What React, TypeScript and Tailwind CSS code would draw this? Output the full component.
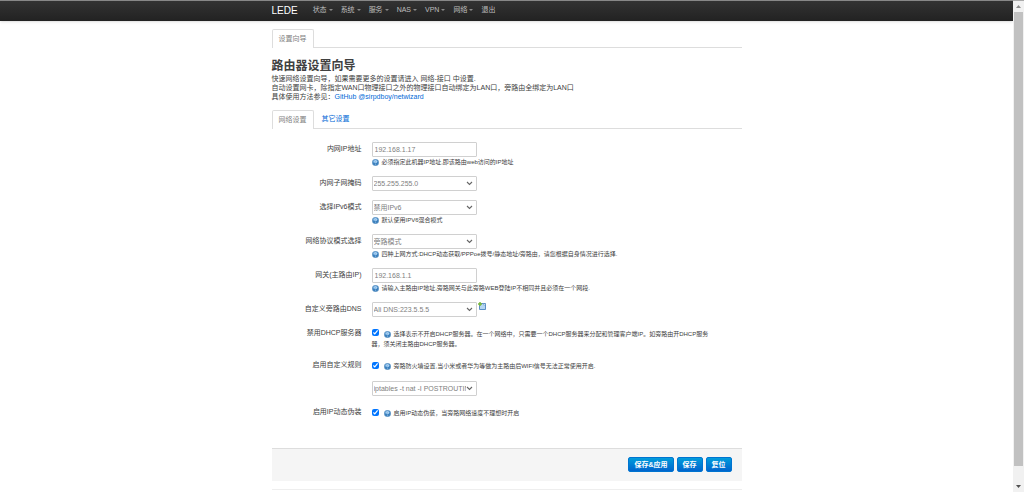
import type { ReactNode } from 'react';

interface RowProps {
  id: string;
  label?: string;
  help?: ReactNode;
  children: ReactNode;
}

interface SelectProps {
  id: string;
  value: string;
  label?: string;
}

const menus = ['状态', '系统', '服务', 'NAS', 'VPN', '网络'];

const HelpIcon = () => (
  <svg className="mr-[3px] inline-block h-[7px] w-[7px] align-middle" viewBox="0 0 14 14" aria-hidden="true">
    <circle cx="7" cy="7" r="6.5" fill="#3a7fbd" stroke="#6f9fc8" />
    <ellipse cx="6.500" cy="5" rx="4.500" ry="3.500" fill="#7fb6e4" />
    <path d="M5 5.400c0-2.600 4.200-2.400 4.200 0C9.200 6.900 7.200 7 7.200 8.600M7.200 10v1.400" fill="none" stroke="#d8eafa" strokeWidth="1.200" />
  </svg>
);

const AddIcon = () => (
  <svg className="h-[8px] w-[8px]" viewBox="0 0 16 16" aria-hidden="true">
    <path d="M3 3h12v12H3z" fill="#b5d6f3" stroke="#5b8fc4" strokeWidth="2" />
    <path d="M11 3v3h4" fill="#fff" stroke="#5b8fc4" />
    <path d="M4 0v8M0 4h8" stroke="#7cb93c" strokeWidth="3" />
  </svg>
);

const TextField = ({ id, value }: SelectProps) => (
  <input
    id={id}
    type="text"
    defaultValue={value}
    className="h-[15px] w-[105px] rounded-[1px] border border-[#d0d0d0] bg-white px-[2px] text-[7px] leading-[13px] text-[#808080] outline-none"
  />
);

const Select = ({ id, value, label }: SelectProps) => (
  <div className="relative w-[105px]">
    <select
      id={id}
      aria-label={label}
      className="block h-[15px] w-full appearance-none rounded-[1px] border border-[#d0d0d0] bg-white pr-[10px] pl-px text-[7px] leading-[13px] text-[#808080] outline-none"
    >
      <option>{value}</option>
    </select>
    <svg className="pointer-events-none absolute top-[5px] right-[4px] h-[5px] w-[7px]" viewBox="0 0 7 5" aria-hidden="true">
      <path d="M1 1l2.500 2.500L6 1" fill="none" stroke="#666" strokeWidth="1.100" />
    </svg>
  </div>
);

const Row = ({ id, label, help, children }: RowProps) => (
  <div className="flex gap-[10px]">
    <div className="w-[90px] shrink-0 text-right leading-[14px]">
      {label && <label htmlFor={id}>{label}</label>}
    </div>
    <div className="min-w-0 flex-1">
      <div className="flex gap-px">{children}</div>
      {help && (
        <p className="text-[6px] leading-[10px]">
          <HelpIcon />
          {help}
        </p>
      )}
    </div>
  </div>
);

const CheckRow = ({ id, label, children }: RowProps) => (
  <div className="flex gap-[10px]">
    <div className="w-[90px] shrink-0 text-right leading-[14px]">
      <label htmlFor={id}>{label}</label>
    </div>
    <p className="min-w-0 flex-1 pt-[3px] text-[6px] leading-[10px]">
      <input id={id} type="checkbox" defaultChecked className="mr-[5px] mb-[3px] h-[7px] w-[7px] align-middle accent-[#0075ff]" />
      <HelpIcon />
      {children}
    </p>
  </div>
);

const Tab = ({ active, children }: { active?: boolean; children: ReactNode }) => (
  <a
    href="#"
    className={
      active
        ? '-mb-px h-[19px] rounded-t-[2px] border border-b-0 border-[#ddd] bg-white px-[6px] leading-[17px] text-[#808080]'
        : 'h-[18px] px-[8px] leading-[18px] text-[#0069d6]'
    }
  >
    {children}
  </a>
);

const Button = ({ children }: { children: ReactNode }) => (
  <button
    type="button"
    className="h-[15px] rounded-[2px] border border-[#0074d0] bg-linear-to-b from-[#049cdb] to-[#0064cd] px-[5px] text-[7px] leading-[13px] font-bold text-white"
  >
    {children}
  </button>
);

const App = () => {
  return (
    <div className="flex h-screen overflow-hidden bg-white font-['Liberation_Sans','Noto_Sans_CJK_SC',sans-serif] text-[7px] text-[#404040]">
      <div className="min-w-0 flex-1">
        <header className="h-[21px] border-t border-[#888] bg-linear-to-b from-[#333] to-[#222] shadow-sm">
          <div className="mx-auto flex h-full w-[470px] items-center gap-[15px] pb-[2px]">
            <a href="#" className="text-[10px] text-white">LEDE</a>
            <nav className="flex gap-[8px] text-[#bfbfbf]">
              {menus.map((menu) => (
                <a key={menu} href="#" className="flex items-center gap-[2px]">
                  {menu}
                  <span className="border-x-2 border-t-2 border-x-transparent border-t-[#888]" />
                </a>
              ))}
              <a href="#">退出</a>
            </nav>
          </div>
        </header>

        <main className="mx-auto w-[470px]">
          <div className="mt-[8px] flex border-b border-[#ddd]">
            <Tab active>设置向导</Tab>
          </div>

          <h2 className="mt-[10px] text-[12px] leading-[16px] font-bold">路由器设置向导</h2>
          <div className="leading-[9px]">
            <p>快速网络设置向导，如果需要更多的设置请进入 网络-接口 中设置.</p>
            <p>自动设置网卡，除指定WAN口物理接口之外的物理接口自动绑定为LAN口，旁路由全绑定为LAN口</p>
            <p>
              具体使用方法参见：<a href="#" className="text-[#0069d6]">GitHub @sirpdboy/netwizard</a>
            </p>
          </div>

          <div className="mt-[9px] flex border-b border-[#ddd]">
            <Tab active>网络设置</Tab>
            <Tab>其它设置</Tab>
          </div>

          <form className="mt-[13px]">
            <div className="flex flex-col gap-[9px]">
              <Row id="lan-ip" label="内网IP地址" help="必须指定此机器IP地址,即该路由web访问的IP地址">
                <TextField id="lan-ip" value="192.168.1.17" />
              </Row>
              <Row id="netmask" label="内网子网掩码">
                <Select id="netmask" value="255.255.255.0" />
              </Row>
              <Row id="ipv6" label="选择IPv6模式" help="默认使用IPV6混合模式">
                <Select id="ipv6" value="禁用IPv6" />
              </Row>
              <Row id="proto" label="网络协议模式选择" help="四种上网方式:DHCP动态获取/PPPoe拨号/静态地址/旁路由，请您根据自身情况进行选择.">
                <Select id="proto" value="旁路模式" />
              </Row>
              <Row id="gateway" label="网关(主路由IP)" help="请输入主路由IP地址,旁路网关与此旁路WEB登陆IP不相同并且必须在一个网段.">
                <TextField id="gateway" value="192.168.1.1" />
              </Row>
              <Row id="dns" label="自定义旁路由DNS">
                <Select id="dns" value="Ali DNS:223.5.5.5" />
                <button type="button" aria-label="Add" className="h-[8px]">
                  <AddIcon />
                </button>
              </Row>
              <CheckRow id="dhcp" label="禁用DHCP服务器">
                选择表示不开启DHCP服务器。在一个网络中，只需要一个DHCP服务器来分配和管理客户端IP。如旁路由开DHCP服务
                <br />
                器，须关闭主路由DHCP服务器。
              </CheckRow>
              <CheckRow id="rules" label="启用自定义规则">
                旁路防火墙设置,当小米或者华为等做为主路由后WIFI信号无法正常使用开启.
              </CheckRow>
              <Row id="iptables">
                <Select id="iptables" label="iptables" value="iptables -t nat -I POSTROUTING -j MASQUERADE" />
              </Row>
              <CheckRow id="masq" label="启用IP动态伪装">
                启用IP动态伪装，当旁路网络速度不理想时开启
              </CheckRow>
            </div>

            <div className="mt-[29px] flex justify-end gap-[3px] border-t border-[#ddd] bg-[#f5f5f5] px-[10px] pt-[8px] pb-[9px]">
              <Button>保存&amp;应用</Button>
              <Button>保存</Button>
              <Button>复位</Button>
            </div>
          </form>

          <footer className="mt-[8px] border-t border-[#eee]" />
        </main>
      </div>

      <div className="flex w-[11px] shrink-0 flex-col items-center border-t border-[#aaa] bg-[#f1f1f1]">
        <svg className="h-[11px] w-[11px]" viewBox="0 0 11 11" aria-hidden="true">
          <path d="M3 7h5L5.500 4z" fill="#8a8a8a" />
        </svg>
        <div className="w-[9px] flex-1 bg-[#c1c1c1]" />
        <svg className="mt-[15px] h-[11px] w-[11px]" viewBox="0 0 11 11" aria-hidden="true">
          <path d="M3 4h5L5.500 7z" fill="#505050" />
        </svg>
      </div>
    </div>
  );
};

export default App;
